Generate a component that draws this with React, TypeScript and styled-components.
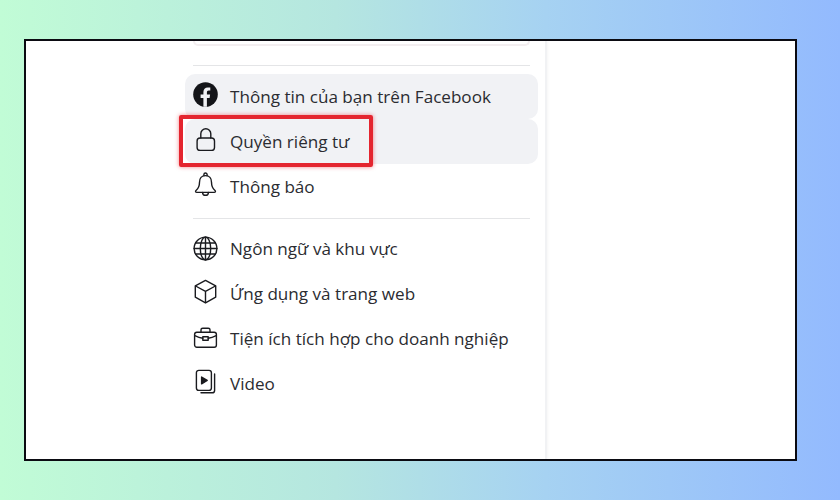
import React from "react";
import styled, { createGlobalStyle } from "styled-components";

const Global = createGlobalStyle`
  html, body { margin: 0; padding: 0; width: 840px; height: 500px; overflow: hidden; }
  body { background: linear-gradient(90deg, #c1fcd6 0%, #b5e6e0 40%, #a6d2f2 65%, #93bafe 100%); font-family: "Open Sans", "Noto Sans", sans-serif; }
`;

const Page = styled.div`
  width: 840px;
  height: 500px;
  box-sizing: border-box;
  padding: 39px 43px 39px 24px;
`;

const Frame = styled.div`
  height: 100%;
  box-sizing: border-box;
  border: 2px solid #0b0b12;
  background: #fff;
  overflow: hidden;
`;

const Sidebar = styled.div`
  width: 521px;
  height: 100%;
  box-sizing: border-box;
  padding: 0 7px 0 159px;
  border-right: 2px solid #f1f2f4;
  box-shadow: 1px 0 3px rgba(0, 0, 0, 0.04);
`;

const CardEdge = styled.div`
  height: 3px;
  margin: 0 8px;
  border: 2px solid #f3eef0;
  border-top: none;
  border-radius: 0 0 10px 10px;
`;

const Divider = styled.div<{ $before: number; $after: number }>`
  height: 1px;
  background: #e4e5e7;
  margin: ${(p) => p.$before}px 8px ${(p) => p.$after}px;
`;

const Row = styled.div<{ $active?: boolean }>`
  position: relative;
  height: 45px;
  display: flex;
  align-items: center;
  gap: 12px;
  padding-left: 8px;
  border-radius: 10px;
  background: ${(p) => (p.$active ? "#f1f2f5" : "transparent")};
`;

const IconSlot = styled.span<{ $lift: number }>`
  width: 25px;
  height: 25px;
  flex: none;
  display: flex;
  align-items: center;
  justify-content: center;
  color: #1a1b1f;
  margin-bottom: ${(p) => p.$lift * 2}px;
`;

const Label = styled.span`
  font-size: 17.1px;
  font-weight: 500;
  color: #2b2c31;
  white-space: nowrap;
`;

const Highlight = styled.div`
  position: absolute;
  left: -6px;
  top: -4px;
  width: 186px;
  height: 44px;
  border: 4px solid #e4252f;
  border-radius: 2px;
  box-shadow: 0 0 4px rgba(232, 32, 44, 0.55);
  pointer-events: none;
`;

const Svg: React.FC<{ children: React.ReactNode }> = ({ children }) => (
  <svg width="25" height="25" viewBox="0 0 25 25" fill="none" stroke="currentColor" strokeWidth="1.4" strokeLinecap="round" strokeLinejoin="round">
    {children}
  </svg>
);

const FacebookIcon = () => (
  <svg width="25" height="25" viewBox="0 0 25 25">
    <circle cx="12.5" cy="12.5" r="12.3" fill="#141519" />
    <path d="M10.4 24.7v-8.6H7.6v-3.6h2.8v-2.4c0-3 1.7-4.7 4.4-4.7 1.2 0 2.5.2 2.5.2v3h-1.5c-1.4 0-1.9.9-1.9 1.8v2.1h3.2l-.5 3.6h-2.7v8.6z" fill="#f1f2f5" />
  </svg>
);

const LockIcon = () => (
  <Svg>
    <rect x="4.1" y="11" width="17.4" height="12.4" rx="3" />
    <path d="M7.8 11V6.8a5 5 0 0 1 10 0V11" />
  </Svg>
);

const BellIcon = () => (
  <Svg>
    <path d="M12.5 3.6c-3.8 0-6 3-6 6.6 0 4.6-1.3 6.4-3.5 8.3-.9.9-.4 1.9.8 1.9h17.4c1.2 0 1.7-1 .8-1.9-2.2-1.9-3.5-3.7-3.5-8.3 0-3.6-2.2-6.6-6-6.6z" />
    <path d="M10.9 3.8V2.6a1.6 1.6 0 0 1 3.2 0v1.2" />
    <path d="M9.6 20.4a2.9 2.9 0 0 0 5.8 0" />
  </Svg>
);

const GlobeIcon = () => (
  <Svg>
    <circle cx="12.5" cy="12.5" r="11.4" />
    <ellipse cx="12.5" cy="12.5" rx="5.2" ry="11.4" />
    <path d="M12.5 1.1v22.8M1.1 12.5h22.8M2.6 7h19.8M2.6 18h19.8" />
  </Svg>
);

const BoxIcon = () => (
  <Svg>
    <path d="M12.5 1.4l10.2 5.4v11.4l-10.2 5.6-10.2-5.6V6.8z" />
    <path d="M2.6 7l9.9 5.4L22.4 7M12.5 12.4v11.2" />
  </Svg>
);

const BriefcaseIcon = () => (
  <Svg>
    <rect x="1.6" y="7.2" width="21.8" height="15" rx="2.2" />
    <path d="M8 7V4.8c0-1 .7-1.6 1.7-1.6h5.6c1 0 1.7.6 1.7 1.6V7" />
    <path d="M1.8 10.6c3 1.6 5.8 2.4 8 2.6M23.2 10.6c-3 1.6-5.8 2.4-8 2.6" />
    <path d="M9.8 11.8h5.4v3.4H9.8z" />
  </Svg>
);

const VideoIcon = () => (
  <Svg>
    <rect x="3.4" y="1.4" width="15" height="20" rx="2.4" />
    <path d="M21.6 5v16.6a2.4 2.4 0 0 1-2.4 2.2H8" />
    <path d="M8.6 8l5.6 3.4-5.6 3.4z" fill="currentColor" />
  </Svg>
);

type Item = { icon: React.ReactNode; label: string; lift: number; active?: boolean; marked?: boolean };

const firstGroup: Item[] = [
  { icon: <FacebookIcon />, label: "Thông tin của bạn trên Facebook", lift: 2, active: true },
  { icon: <LockIcon />, label: "Quyền riêng tư", lift: 2, active: true, marked: true },
  { icon: <BellIcon />, label: "Thông báo", lift: 2.5 },
];

const secondGroup: Item[] = [
  { icon: <GlobeIcon />, label: "Ngôn ngữ và khu vực", lift: 0 },
  { icon: <BoxIcon />, label: "Ứng dụng và trang web", lift: 2 },
  { icon: <BriefcaseIcon />, label: "Tiện ích tích hợp cho doanh nghiệp", lift: 1.5 },
  { icon: <VideoIcon />, label: "Video", lift: 2 },
];

const renderRow = (item: Item) => (
  <Row key={item.label} $active={item.active}>
    <IconSlot $lift={item.lift}>{item.icon}</IconSlot>
    <Label>{item.label}</Label>
    {item.marked && <Highlight />}
  </Row>
);

export default function App() {
  return (
    <Page>
      <Global />
      <Frame>
        <Sidebar>
          <CardEdge />
          <Divider $before={19} $after={8} />
          {firstGroup.map(renderRow)}
          <Divider $before={9} $after={7} />
          {secondGroup.map(renderRow)}
        </Sidebar>
      </Frame>
    </Page>
  );
}
